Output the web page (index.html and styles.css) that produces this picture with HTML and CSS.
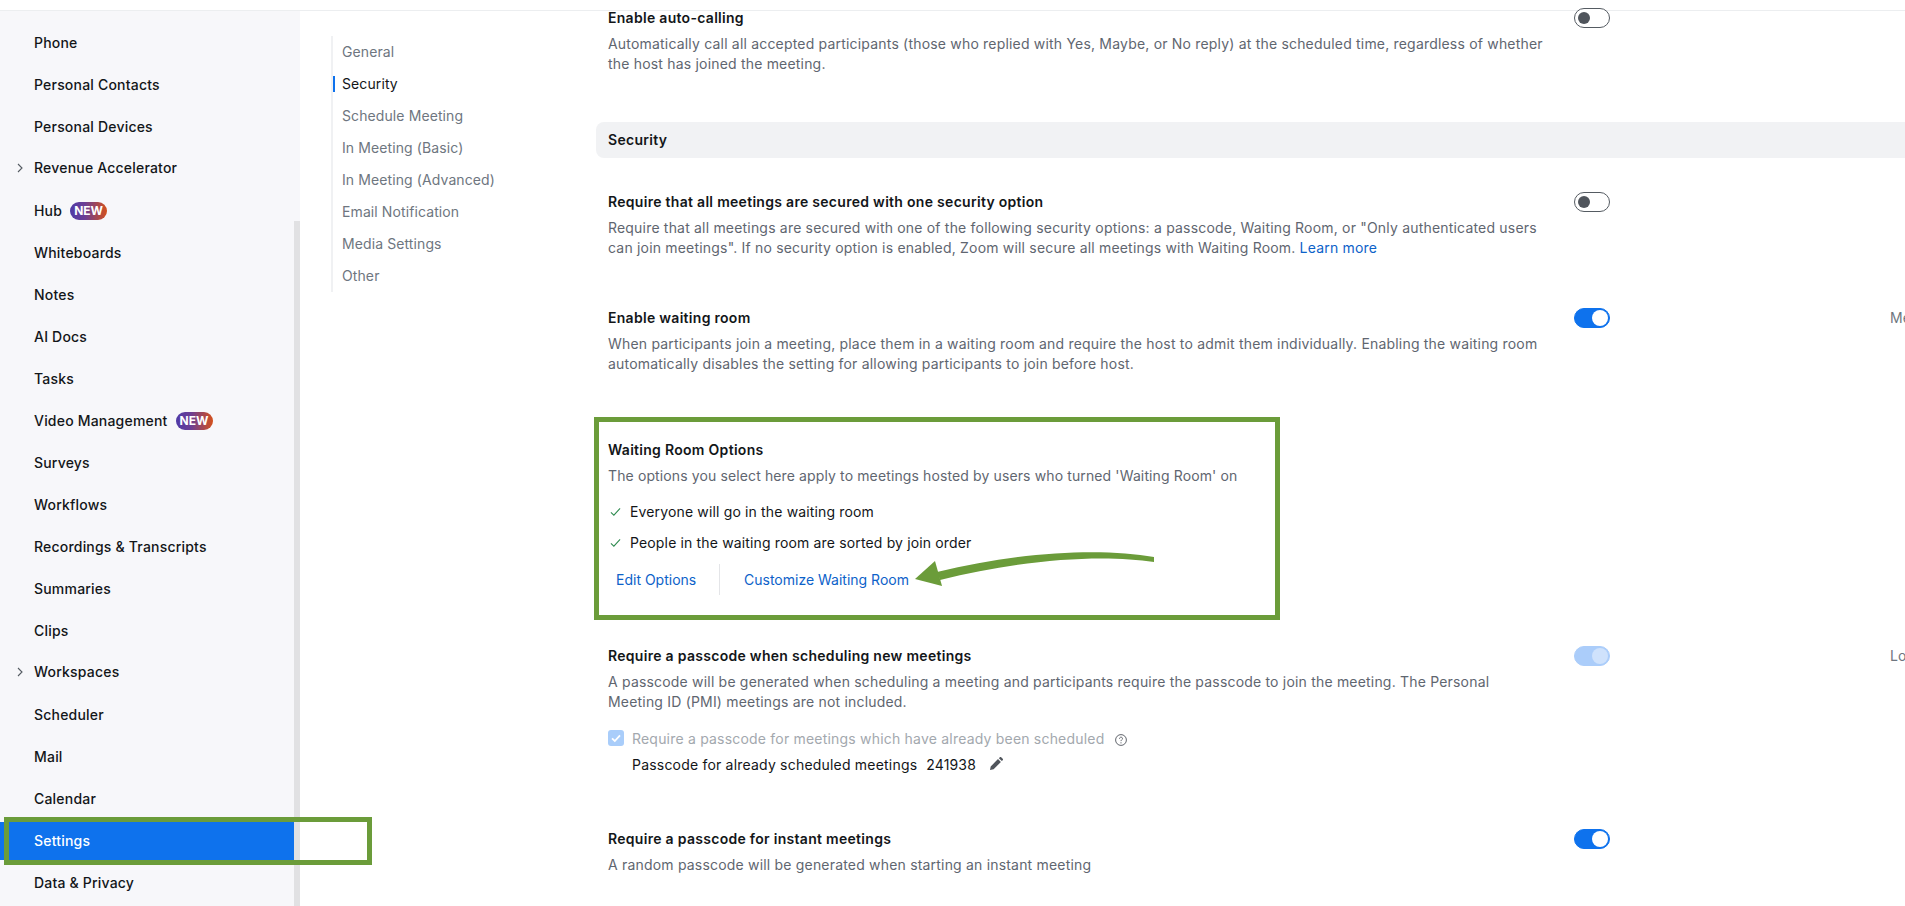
FILE: index.html
```html
<!DOCTYPE html>
<html lang="en">
<head>
    <meta charset="UTF-8">
    <meta name="viewport" content="width=device-width, initial-scale=1.0">
    <title>Settings</title>
    <link rel="stylesheet" href="styles.css">
</head>
<body>
    <header class="topbar"></header>
    <div class="shell">
        <!-- Left navigation -->
        <aside class="sidebar">
            <div class="scroll-thumb"></div>
            <nav class="side-nav">
                <a class="side-item">Phone</a>
                <a class="side-item">Personal Contacts</a>
                <a class="side-item">Personal Devices</a>
                <a class="side-item expand">
                    <svg class="chevron" viewBox="0 0 8 10"><path d="M2 1l4 4-4 4"/></svg>
                    Revenue Accelerator
                </a>
                <a class="side-item">Hub <span class="badge">NEW</span></a>
                <a class="side-item">Whiteboards</a>
                <a class="side-item">Notes</a>
                <a class="side-item">AI Docs</a>
                <a class="side-item">Tasks</a>
                <a class="side-item">Video Management <span class="badge">NEW</span></a>
                <a class="side-item">Surveys</a>
                <a class="side-item">Workflows</a>
                <a class="side-item">Recordings &amp; Transcripts</a>
                <a class="side-item">Summaries</a>
                <a class="side-item">Clips</a>
                <a class="side-item expand">
                    <svg class="chevron" viewBox="0 0 8 10"><path d="M2 1l4 4-4 4"/></svg>
                    Workspaces
                </a>
                <a class="side-item">Scheduler</a>
                <a class="side-item">Mail</a>
                <a class="side-item">Calendar</a>
                <a class="side-item active">Settings</a>
                <a class="side-item">Data &amp; Privacy</a>
            </nav>
        </aside>

        <!-- Settings tabs -->
        <nav class="tabs">
            <a class="tab">General</a>
            <a class="tab active">Security</a>
            <a class="tab">Schedule Meeting</a>
            <a class="tab">In Meeting (Basic)</a>
            <a class="tab">In Meeting (Advanced)</a>
            <a class="tab">Email Notification</a>
            <a class="tab">Media Settings</a>
            <a class="tab">Other</a>
        </nav>

        <!-- Settings list -->
        <main class="content">
            <section class="setting first">
                <div class="setting-text">
                    <h3>Enable auto-calling</h3>
                    <p>Automatically call all accepted participants (those who replied with Yes, Maybe, or No reply) at the scheduled time, regardless of whether<br>the host has joined the meeting.</p>
                </div>
                <span class="toggle"></span>
            </section>

            <h2 class="band">Security</h2>

            <section class="setting secured">
                <div class="setting-text">
                    <h3>Require that all meetings are secured with one security option</h3>
                    <p>Require that all meetings are secured with one of the following security options: a passcode, Waiting Room, or "Only authenticated users<br>can join meetings". If no security option is enabled, Zoom will secure all meetings with Waiting Room. <a class="link">Learn more</a></p>
                </div>
                <span class="toggle"></span>
            </section>

            <section class="setting waiting">
                <div class="setting-text">
                    <h3>Enable waiting room</h3>
                    <p>When participants join a meeting, place them in a waiting room and require the host to admit them individually. Enabling the waiting room<br>automatically disables the setting for allowing participants to join before host.</p>
                </div>
                <span class="toggle on"></span>
                <span class="side-note">Me</span>
            </section>

            <div class="options-box">
                <h3>Waiting Room Options</h3>
                <p>The options you select here apply to meetings hosted by users who turned 'Waiting Room' on</p>
                <ul class="checks">
                    <li><svg class="check" viewBox="0 0 12 10"><path d="M1 5.500l3.200 3L11 1"/></svg>Everyone will go in the waiting room</li>
                    <li><svg class="check" viewBox="0 0 12 10"><path d="M1 5.500l3.200 3L11 1"/></svg>People in the waiting room are sorted by join order</li>
                </ul>
                <div class="box-links">
                    <a class="link">Edit Options</a>
                    <a class="link">Customize Waiting Room</a>
                </div>
                <svg class="arrow" viewBox="0 0 250 50">
                    <path d="M241 9C190 0 110 3 24 24L27 32C110 11 190 6 241 14z"/>
                    <path d="M2 31L22 13L29 38z"/>
                </svg>
            </div>

            <section class="setting passcode">
                <div class="setting-text">
                    <h3>Require a passcode when scheduling new meetings</h3>
                    <p>A passcode will be generated when scheduling a meeting and participants require the passcode to join the meeting. The Personal<br>Meeting ID (PMI) meetings are not included.</p>
                    <div class="check-row">
                        <span class="checkbox">
                            <svg viewBox="0 0 16 16"><path d="M4 8.400l2.800 2.600L12 5.400"/></svg>
                        </span>
                        <span>Require a passcode for meetings which have already been scheduled</span>
                        <svg class="help" viewBox="0 0 12 12">
                            <circle cx="6" cy="6" r="5.400"/>
                            <path d="M4.500 4.700c0-2 3-2 3-.1 0 1.200-1.500 1.200-1.500 2.500"/>
                            <circle class="dot" cx="6" cy="8.800" r=".6"/>
                        </svg>
                    </div>
                    <div class="code-row">
                        <span>Passcode for already scheduled meetings</span>
                        <span>241938</span>
                        <svg class="pencil" viewBox="0 0 14 14"><path d="M1 13l.7-3.600L9 2.100l2.900 2.900-7.300 7.300zM9.900 1.200l.9-.9a1 1 0 0 1 1.400 0l1.500 1.500a1 1 0 0 1 0 1.400l-.9.9z"/></svg>
                    </div>
                </div>
                <span class="toggle on locked"></span>
                <span class="side-note">Lo</span>
            </section>

            <section class="setting instant">
                <div class="setting-text">
                    <h3>Require a passcode for instant meetings</h3>
                    <p>A random passcode will be generated when starting an instant meeting</p>
                </div>
                <span class="toggle on"></span>
            </section>
        </main>
    </div>
</body>
</html>
```

FILE: styles.css
```css
/* Global Styles */
html, body {
    margin: 0;
    height: 906px;
    overflow: hidden;
}

body {
    font-family: 'Inter', 'Liberation Sans', sans-serif;
    font-size: 14px;
    background: #ffffff;
    color: #131619;
}

h2, h3, p, ul {
    margin: 0;
    padding: 0;
}

.topbar {
    height: 10px;
    background: #ffffff;
    border-bottom: 1px solid #eceef0;
}

.shell {
    display: flex;
    height: 895px;
}

/* Left navigation */
.sidebar {
    position: relative;
    flex: 0 0 300px;
    background: #f7f7fa;
}

.scroll-thumb {
    position: absolute;
    top: 210px;
    bottom: 0;
    right: 0;
    width: 6px;
    background: #e1e1e3;
}

.side-nav {
    display: flex;
    flex-direction: column;
    gap: 4px;
    padding-top: 13px;
}

.side-item {
    position: relative;
    box-sizing: border-box;
    display: flex;
    align-items: center;
    gap: 8px;
    height: 38px;
    padding: 0 0 1px 34px;
    width: 294px;
    font-weight: 500;
    letter-spacing: 0.2px;
}

.side-item.expand {
    padding-bottom: 3px;
}

.side-item.active {
    background: #0e72ed;
    color: #ffffff;
}

/* green annotation round the Settings row */
.side-item.active::after {
    content: "";
    position: absolute;
    left: 4px;
    top: -5px;
    width: 358px;
    height: 38px;
    border: 5px solid #6b9c3a;
}

.chevron {
    position: absolute;
    left: 16px;
    top: 13px;
    width: 8px;
    height: 10px;
    fill: none;
    stroke: #555b62;
    stroke-width: 1.1;
}

.badge {
    width: 37px;
    height: 18px;
    line-height: 18px;
    border-radius: 9px;
    text-align: center;
    font-size: 12px;
    font-weight: 700;
    letter-spacing: 0;
    color: #ffffff;
    background: linear-gradient(90deg, #4f3aa6, #6b3f95 40%, #d4501c);
}

/* Settings tabs */
.tabs {
    flex: 0 0 261px;
    align-self: flex-start;
    display: flex;
    flex-direction: column;
    margin: 25px 0 0 31px;
    border-left: 2px solid #f0f1f3;
}

.tab {
    height: 32px;
    line-height: 32px;
    padding-left: 9px;
    margin-left: -2px;
    border-left: 2px solid transparent;
    color: #6e7680;
    letter-spacing: 0.1px;
}

.tab.active {
    color: #131619;
    background: linear-gradient(#0e72ed, #0e72ed) left center / 2px 16px no-repeat;
}

/* Settings list */
.content {
    flex: 1;
    min-width: 0;
    margin-top: -3px;
}

.setting {
    position: relative;
    display: flex;
    margin-left: 14px;
}

.setting-text {
    flex: none;
    width: 966px;
}

h3 {
    font-size: 14px;
    line-height: 20px;
    font-weight: 600;
    letter-spacing: 0.29px;
}

.setting p,
.options-box p {
    margin-top: 6px;
    line-height: 20px;
    color: #5f6670;
    letter-spacing: 0.19px;
}

.options-box p {
    letter-spacing: 0.12px;
}

.band {
    margin: 48px 0 0 2px;
    height: 36px;
    line-height: 36px;
    padding-left: 12px;
    font-size: 14px;
    font-weight: 600;
    letter-spacing: 0.29px;
    background: #f1f2f4;
    border-radius: 8px 0 0 8px;
}

.secured { margin-top: 34px; }
.waiting { margin-top: 50px; }
.passcode { margin-top: 26px; }
.instant { margin-top: 55px; }

.link {
    color: #0d62c9;
}

/* Toggles */
.toggle {
    position: relative;
    box-sizing: border-box;
    flex: none;
    width: 36px;
    height: 20px;
    border: 1px solid #555b62;
    border-radius: 10px;
    background: #ffffff;
}

.toggle::after {
    content: "";
    position: absolute;
    left: 3px;
    top: 3px;
    width: 12px;
    height: 12px;
    border-radius: 50%;
    background: #50555c;
}

.toggle.on {
    border-color: #0e72ed;
    background: #0e72ed;
}

.toggle.on::after {
    left: 17px;
    top: 1px;
    width: 16px;
    height: 16px;
    background: #ffffff;
}

.toggle.locked {
    border-color: #abcdfa;
    background: #abcdfa;
}

.toggle.locked::after {
    background: #cfe2fc;
}

.side-note {
    flex: none;
    margin-left: 280px;
    line-height: 20px;
    color: #6e7680;
}

/* Waiting room options box, green frame is an annotation */
.options-box {
    position: relative;
    box-sizing: border-box;
    width: 686px;
    height: 203px;
    margin-top: 43px;
    padding: 18px 0 0 9px;
    border: 5px solid #6b9c3a;
}

.checks {
    list-style: none;
    margin-top: 10px;
}

.checks li {
    display: flex;
    align-items: center;
    height: 31px;
    letter-spacing: 0.15px;
}

.check {
    width: 11px;
    height: 10px;
    margin: 0 9px 0 2px;
    fill: none;
    stroke: #2d8a4e;
    stroke-width: 1.1;
}

.box-links {
    display: flex;
    align-items: center;
    height: 31px;
    margin-top: 6px;
}

.box-links .link:first-child {
    box-sizing: border-box;
    width: 104px;
    margin-left: 8px;
    height: 31px;
    line-height: 31px;
    border-right: 1px solid #e4e5e8;
}

.box-links .link:last-child {
    margin-left: 24px;
}

.arrow {
    position: absolute;
    left: 314px;
    top: 126px;
    width: 250px;
    height: 50px;
    fill: #6b9c3a;
}

/* Passcode sub rows */
.check-row,
.code-row {
    display: flex;
    align-items: center;
    height: 20px;
}

.check-row {
    margin-top: 16px;
    color: #a3a8ae;
    letter-spacing: 0.2px;
}

.code-row {
    margin: 6px 0 0 24px;
    letter-spacing: 0.2px;
}

.code-row span:nth-child(2) {
    margin-left: 9px;
    letter-spacing: 0.15px;
}

.checkbox {
    width: 16px;
    height: 16px;
    margin-right: 8px;
    border-radius: 3px;
    background: #a9cdfa;
}

.checkbox svg {
    display: block;
    fill: none;
    stroke: #ffffff;
    stroke-width: 1.8;
}

.help {
    width: 12px;
    height: 12px;
    margin: 3px 0 0 11px;
    fill: none;
    stroke: #50555c;
    stroke-width: 0.9;
}

.help .dot {
    fill: #50555c;
    stroke: none;
}

.pencil {
    width: 14px;
    height: 14px;
    margin-left: 13px;
    fill: #50555c;
}
```
